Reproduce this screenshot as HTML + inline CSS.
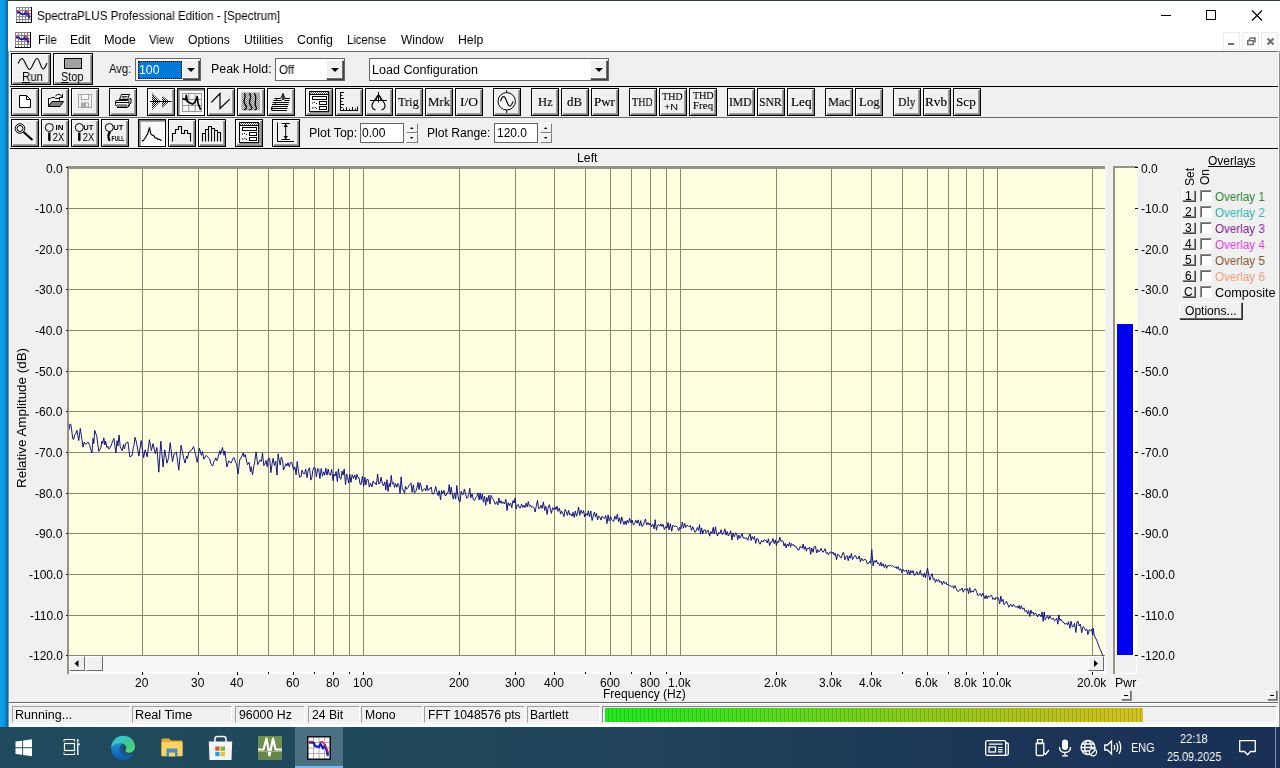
<!DOCTYPE html><html><head><meta charset="utf-8"><title>SpectraPLUS Professional Edition - [Spectrum]</title><style>
*{box-sizing:border-box;margin:0;padding:0}
html,body{width:1280px;height:768px;overflow:hidden;background:#f0f0f0;font-family:"Liberation Sans",sans-serif;font-size:12px;color:#000}
.a{position:absolute}
.t{position:absolute;white-space:nowrap;line-height:1;will-change:transform}
.ic{position:absolute;left:-1px;top:-1px}
#desk{left:0;top:0;width:10px;height:728px;background:linear-gradient(90deg,#0ea2ec 0,#0a98e2 4px,#0c84c8 6px,#14629c 7.5px,#1c5686 8px,#6f9cc0 8px,#6f9cc0 9px,#fff 9px)}
#title{left:8px;top:0;width:1272px;height:31px;background:#fff;border-top:1px solid #2b3a42}
#menu{left:8px;top:31px;width:1272px;height:20px;background:#fff}
.tb{left:9px;width:1270px;background:#f0f0f0;border-top:1px solid #6a6a6a}
.btn{will-change:transform;position:absolute;width:28px;height:28px;background:#f0f0f0;border:1px solid #000;box-shadow:inset 1px 1px 0 #fff,inset -1px -1px 0 #808080,inset -2px -2px 0 #a0a0a0;}
.btn.dn{box-shadow:inset 1px 1px 0 #808080,inset 2px 2px 0 #a8a8a8,inset -1px -1px 0 #fff;background:#f8f8f8}
.combo{position:absolute;background:#fff;border:1px solid #666}
.cbtn{position:absolute;width:17px;height:19px;background:#f0f0f0;border:1px solid;border-color:#fff #707070 #707070 #fff;box-shadow:1px 1px 0 #404040}
.cbtn:after{content:"";position:absolute;left:4px;top:7px;border:4px solid transparent;border-top:4px solid #000;border-bottom:0}
.spin{position:absolute;width:12px;height:10px;background:#f2f2f2;border:1px solid;border-color:#fff #7c7c7c #7c7c7c #fff}
.gl{position:absolute;background:#87876c}
.sp{position:absolute;height:17px;top:706px;border:1px solid;border-color:#a0a0a0 #fff #fff #a0a0a0}
#task{left:0;top:727px;width:1280px;height:41px;background:linear-gradient(90deg,#204a5d 0%,#21485b 35%,#20435a 50%,#1e3c58 62%,#1c3657 75%,#1a3056 100%)}
.ob{position:absolute;width:13px;height:11px;left:1182px;border:1px solid;border-color:#fff #8a8a8a #8a8a8a #fff;box-shadow:1px 1px 0 #484848;background:#f0f0f0}
.ck{position:absolute;width:12px;height:12px;left:1200px;background:#fff;border:1px solid;border-color:#8c8c8c #fafafa #fafafa #8c8c8c;box-shadow:inset 1px 1px 0 #686868}
.sm{position:absolute;width:10px;height:10px;background:#f0f0f0;border:1px solid;border-color:#fff #707070 #707070 #fff;box-shadow:1px 1px 0 #909090}
.sm:after{content:"";position:absolute;left:2px;top:4px;width:4px;height:1px;background:#000}
.mdi{position:absolute;top:32px;width:17px;height:18px;border:1px solid #ececec;background:#fdfdfd}
</style></head><body>
<svg width="0" height="0" style="position:absolute"><defs>
<pattern id="dth" width="2" height="2" patternUnits="userSpaceOnUse"><rect width="2" height="2" fill="#e8e8e8"/><rect width="1" height="1" fill="#000"/><rect x="1" y="1" width="1" height="1" fill="#000"/></pattern>
<pattern id="dtg" width="2" height="2" patternUnits="userSpaceOnUse"><rect width="2" height="2" fill="#d0d0d0"/><rect width="1" height="1" fill="#8c8c8c"/><rect x="1" y="1" width="1" height="1" fill="#8c8c8c"/></pattern>
<pattern id="dtp" width="2" height="2" patternUnits="userSpaceOnUse"><rect width="2" height="2" fill="#fff"/><rect width="1" height="1" fill="#555"/><rect x="1" y="1" width="1" height="1" fill="#555"/></pattern>
</defs></svg>
<div class="a" id="desk"></div>
<div class="a" id="title"></div>
<div class="a" style="left:16px;top:7px;width:16px;height:16px"><!--app--><svg style="position:absolute;left:0;top:0" width="16" height="16" viewBox="0 0 16 16"><rect width="16" height="16" fill="#fff"/><path d="M0.50 0V15.0M0 0.50H15.0" stroke="#8a8a8a" stroke-width="1.00"/><path d="M3.50 0V15.0M0 3.50H15.0" stroke="#8a8a8a" stroke-width="1.00"/><path d="M6.50 0V15.0M0 6.50H15.0" stroke="#8a8a8a" stroke-width="1.00"/><path d="M9.50 0V15.0M0 9.50H15.0" stroke="#8a8a8a" stroke-width="1.00"/><path d="M12.50 0V15.0M0 12.50H15.0" stroke="#8a8a8a" stroke-width="1.00"/><path d="M15.5 0V15.5H0" fill="none" stroke="#000" stroke-width="1.00"/><path d="M1.0 5.0L4.0 5.5L5.0 7.0L8.0 7.5L9.5 5.5L11.0 8.0L12.5 6.5L13.5 11.5" fill="none" stroke="#1414b8" stroke-width="1.60"/><path d="M0.5 4.0L3.0 4.5M8.5 5.0L10.5 4.0L12.0 5.5L14.0 9.5" fill="none" stroke="#d01840" stroke-width="1.20"/></svg></div>
<div class="t" style="left:37.18px;top:10.20px;font-size:12px;transform:scaleX(0.969);transform-origin:0 0;">SpectraPLUS Professional Edition - [Spectrum]</div>
<svg class="a" style="left:1140px;top:1px" width="140" height="30"><path d="M21 14.500H31" stroke="#000"/><rect x="66.500" y="9.500" width="9" height="9" fill="none" stroke="#000"/><path d="M112 9.500L122 19.500M122 9.500L112 19.500" stroke="#000" stroke-width="1.100"/></svg>
<div class="a" id="menu"></div>
<div class="a" style="left:15px;top:32px;width:16px;height:16px"><svg style="position:absolute;left:0;top:0" width="16" height="16" viewBox="0 0 16 16"><rect width="16" height="16" fill="#fff"/><path d="M0.50 0V15.0M0 0.50H15.0" stroke="#8a8a8a" stroke-width="1.00"/><path d="M3.50 0V15.0M0 3.50H15.0" stroke="#8a8a8a" stroke-width="1.00"/><path d="M6.50 0V15.0M0 6.50H15.0" stroke="#8a8a8a" stroke-width="1.00"/><path d="M9.50 0V15.0M0 9.50H15.0" stroke="#8a8a8a" stroke-width="1.00"/><path d="M12.50 0V15.0M0 12.50H15.0" stroke="#8a8a8a" stroke-width="1.00"/><path d="M15.5 0V15.5H0" fill="none" stroke="#000" stroke-width="1.00"/><path d="M1.0 5.0L4.0 5.5L5.0 7.0L8.0 7.5L9.5 5.5L11.0 8.0L12.5 6.5L13.5 11.5" fill="none" stroke="#1414b8" stroke-width="1.60"/><path d="M0.5 4.0L3.0 4.5M8.5 5.0L10.5 4.0L12.0 5.5L14.0 9.5" fill="none" stroke="#d01840" stroke-width="1.20"/></svg></div>
<div class="t" style="left:37.57px;top:34.40px;font-size:12px;transform:scaleX(0.968);transform-origin:0 0;">File</div>
<div class="t" style="left:69.66px;top:34.40px;font-size:12px;transform:scaleX(0.981);transform-origin:0 0;">Edit</div>
<div class="t" style="left:103.73px;top:34.40px;font-size:12px;transform:scaleX(1.059);transform-origin:0 0;">Mode</div>
<div class="t" style="left:149.40px;top:34.40px;font-size:12px;transform:scaleX(0.946);transform-origin:0 0;">View</div>
<div class="t" style="left:188.25px;top:34.40px;font-size:12px;transform:scaleX(1.013);transform-origin:0 0;">Options</div>
<div class="t" style="left:243.99px;top:34.40px;font-size:12px;transform:scaleX(1.017);transform-origin:0 0;">Utilities</div>
<div class="t" style="left:297.28px;top:34.40px;font-size:12px;transform:scaleX(1.034);transform-origin:0 0;">Config</div>
<div class="t" style="left:347.10px;top:34.40px;font-size:12px;transform:scaleX(0.942);transform-origin:0 0;">License</div>
<div class="t" style="left:400.90px;top:34.40px;font-size:12px;">Window</div>
<div class="t" style="left:457.77px;top:34.40px;font-size:12px;transform:scaleX(1.023);transform-origin:0 0;">Help</div>
<div class="mdi" style="left:1223px"></div>
<div class="mdi" style="left:1242px"></div>
<div class="mdi" style="left:1261px"></div>
<svg class="a" style="left:1223px;top:32px" width="56" height="18"><rect x="5" y="11" width="6" height="2" fill="#6e6e6e"/><path d="M26.500 6H32V10.500M26.500 6.500V8" fill="none" stroke="#6e6e6e" stroke-width="1.600"/><rect x="24.700" y="8.700" width="5.600" height="3.800" fill="none" stroke="#6e6e6e" stroke-width="1.400"/><path d="M44.500 6.500L50.500 12.500M50.500 6.500L44.500 12.500" stroke="#6e6e6e" stroke-width="2"/></svg>
<div class="a tb" style="top:51px;height:36px"></div>
<div class="a tb" style="top:86px;height:31px;border-top-color:#000"></div>
<div class="a tb" style="top:117px;height:32px;border-bottom:1px solid #000"></div>
<div class="a" style="left:9px;top:51px;width:1px;height:677px;background:#fff"></div>
<div class="a" style="left:1278px;top:51px;width:1px;height:676px;background:#fafafa"></div>
<div class="a" style="left:1279px;top:51px;width:1px;height:676px;background:#8c8c8c"></div>
<div class="btn" style="left:11px;top:53px;width:40px;height:32px"></div>
<svg class="a" style="left:11px;top:53px" width="40" height="32"><path d="M7 10.500C8.500 8 9.500 5.500 11 5.500C13.500 5.500 16 16.500 18.500 16.500C21 16.500 23.500 5.500 26 5.500C28.500 5.500 30 16 32 16C33.500 16 35 12.500 36 10" fill="none" stroke="#000" stroke-width="1.100"/></svg>
<div class="t" style="left:21.68px;top:71.20px;font-size:12px;transform:scaleX(0.954);transform-origin:0 0;"><u>R</u>un</div>
<div class="btn" style="left:53px;top:53px;width:40px;height:32px"></div>
<div class="a" style="left:64px;top:58px;width:18px;height:11px;background:#a0a0a0;border:1px solid #000"></div>
<div class="t" style="left:61.01px;top:71.20px;font-size:12px;transform:scaleX(0.909);transform-origin:0 0;"><u>S</u>top</div>
<div class="t" style="left:109.20px;top:62.80px;font-size:12px;transform:scaleX(0.932);transform-origin:0 0;">Avg:</div>
<div class="combo" style="left:135px;top:58px;width:66px;height:23px"><div class="a" style="left:2px;top:2px;width:44px;height:18px;background:#0078d7;outline:1px dotted #000;outline-offset:-1px"></div><div class="cbtn" style="left:46px;top:1px"></div></div>
<div class="t" style="left:139.38px;top:63.50px;font-size:12px;transform:scaleX(1.024);transform-origin:0 0;color:#fff;">100</div>
<div class="t" style="left:210.51px;top:62.80px;font-size:12px;transform:scaleX(1.032);transform-origin:0 0;">Peak Hold:</div>
<div class="combo" style="left:275px;top:58px;width:70px;height:23px"><div class="cbtn" style="left:50px;top:1px"></div></div>
<div class="t" style="left:278.88px;top:63.50px;font-size:12px;transform:scaleX(0.954);transform-origin:0 0;">Off</div>
<div class="combo" style="left:369px;top:58px;width:240px;height:23px"><div class="cbtn" style="left:220px;top:1px"></div></div>
<div class="t" style="left:372.20px;top:63.50px;font-size:12px;transform:scaleX(1.046);transform-origin:0 0;">Load Configuration</div>
<div class="btn" style="left:11px;top:88px"><svg class="ic" width="28" height="28" viewBox="0 0 28 28" ><path d="M8.5 7.5H15.5L19.5 11.5V19.5H8.5Z" fill="#fff" stroke="#000"/><path d="M15.5 7.5V11.5H19.5" fill="none" stroke="#000" stroke-width="1"/></svg></div>
<div class="btn" style="left:41px;top:88px"><svg class="ic" width="28" height="28" viewBox="0 0 28 28" ><path d="M7.5 18.5V10.5H9.5L10.5 9.5H13.5L14.5 10.5H18.5V12.5" fill="none" stroke="#000" stroke-width="1"/><path d="M7.5 18.5L11 13.5H22.5L19 18.5Z" fill="#808080" stroke="#000"/><path d="M14.5 8Q17.5 4.5 21 8.5" fill="none" stroke="#000" stroke-width="1"/><path d="M21.5 6V9.5H18" fill="none" stroke="#000" stroke-width="1"/></svg></div>
<div class="btn" style="left:71px;top:88px"><svg class="ic" width="28" height="28" viewBox="0 0 28 28" ><rect x="7.5" y="6.5" width="13" height="13" fill="#f0f0f0" stroke="#a8a8a8"/><rect x="10.5" y="6.5" width="7" height="5" fill="#fafafa" stroke="#a8a8a8"/><rect x="10" y="14.5" width="8" height="5" fill="#a8a8a8"/><rect x="15" y="15.5" width="2" height="3" fill="#f4f4f4"/></svg></div>
<div class="btn" style="left:109px;top:88px"><svg class="ic" width="28" height="28" viewBox="0 0 28 28" ><path d="M10.5 11.5L12.5 6.5H20.5L18.5 11.5Z" fill="#fff" stroke="#000"/><path d="M13 8.5H18.5M12.5 10H17.5" stroke="#000" stroke-width=".8"/><path d="M8 12.5 Q6.5 12.5 6.5 14V16.5Q6.5 18 8 18H18.5Q20 18 20 16.500V14Q20 12.500 18.500 12.500Z" fill="#fff" stroke="#000"/><path d="M10 11.5H19.500L22 10.500V15L20 17" fill="none" stroke="#000" stroke-width="1"/><path d="M7 14.500H19.500" stroke="#000"/><path d="M8 16.500H18" stroke="#909090"/><path d="M8 19.500H18.500L21 17" fill="none" stroke="#000" stroke-width="1"/></svg></div>
<div class="btn" style="left:147px;top:88px"><svg class="ic" width="28" height="28" viewBox="0 0 28 28" ><path d="M5 5L13.500 13.500L5 22Z" fill="url(#dth)"/><path d="M15 7.500L22 13.500L15 20Z" fill="url(#dth)"/><path d="M3 13.500H24.500" stroke="#000"/></svg></div>
<div class="btn dn" style="left:177px;top:88px"><svg class="ic" width="28" height="28" viewBox="0 0 28 28" ><rect x="5.500" y="5.500" width="19" height="18" fill="#f6f6f6" stroke="#989898"/><path d="M11.800 5.500V23.500M18.200 5.500V23.500M5.500 11.500H24.500M5.500 17.500H24.500" stroke="#989898"/><path d="M5.500 10.500L8.600 11.800L9.300 7.400L10.300 13.600L13 14.900L15.500 16.100L18 14.200L20.200 8.600L21.100 15.500L23.600 21.700" fill="none" stroke="#000" stroke-width="1.700" stroke-linejoin="round"/></svg></div>
<div class="btn" style="left:207px;top:88px"><svg class="ic" width="28" height="28" viewBox="0 0 28 28" ><path d="M4.300 14.300L13 5.500V20.500L22.800 11.100" fill="none" stroke="#000" stroke-width="1.200"/></svg></div>
<div class="btn" style="left:237px;top:88px"><svg class="ic" width="28" height="28" viewBox="0 0 28 28" ><rect x="4.500" y="4.500" width="18.500" height="18" fill="url(#dtg)"/><path d="M7.500 5Q9 8 7.500 11T8.500 17T7 22M12.500 5Q14.500 9 13 12T14 18T12 22M17.500 5Q19.500 9 18.500 13T19 19T17.500 22" fill="none" stroke="#000" stroke-width="1.200"/></svg></div>
<div class="btn" style="left:267px;top:88px"><svg class="ic" width="28" height="28" viewBox="0 0 28 28" ><path d="M7.500 10.500H13.500L15 8L16 5.500L17 8L17.500 10.500H23M6.300 12.500H14.500L16 10.500L17.500 12.500H22.500M5.500 14.500H22M5 16.500H21.500M4.800 18.500H21M4.500 20.500H20.500M5 22.500H20" fill="none" stroke="#000"/><path d="M15 10.500L16 6L17 10.500Z" fill="#000"/><rect x="4" y="19" width="1.500" height="3.500" fill="#000"/><path d="M10 10.500L8.500 12.500M9 14.500L7.500 16.500" stroke="#000"/></svg></div>
<div class="btn" style="left:305px;top:88px"><svg class="ic" width="28" height="28" viewBox="0 0 28 28" ><rect x="4.500" y="3.500" width="19" height="20" fill="#fafafa" stroke="#000"/><rect x="5" y="4" width="18" height="2.500" fill="url(#dtp)"/><path d="M4.500 6.500H23.500" stroke="#000"/><rect x="7.500" y="8.500" width="14" height="3" fill="#fff" stroke="#000"/><rect x="14.500" y="13.500" width="7" height="3" fill="#fff" stroke="#000"/><rect x="14.500" y="18.500" width="7" height="3" fill="#fff" stroke="#000"/><path d="M7 15H8M9 14.500H10M11 15.500H12M7 20H8.500M9.500 19.500H10.500M11 20.500H12" stroke="#000"/><path d="M24.300 4V24.300H5" fill="none" stroke="#555" stroke-width=".8"/></svg></div>
<div class="btn" style="left:335px;top:88px"><svg class="ic" width="28" height="28" viewBox="0 0 28 28" ><path d="M5.500 4V22.500H23" fill="none" stroke="#000"/><path d="M5.500 4.500H9M5.500 7.500H7.500M5.500 10.500H9M5.500 13.500H7.500M5.500 16.500H9M5.500 19.500H7.500M8.500 22V20.500M11.500 22V19M14.500 22V20.500M17.500 22V19M20.500 22V20.500M22.500 22V18.500" stroke="#000"/></svg></div>
<div class="btn" style="left:365px;top:88px"><svg class="ic" width="28" height="28" viewBox="0 0 28 28" ><path d="M13.500 4V14.500M5 12.500H22" stroke="#000"/><path d="M13 7L7.800 15Q5.800 18.500 8.500 21L10.500 22M14 7L19.200 15Q21.200 18.500 18.500 21L16.500 22" fill="none" stroke="#000" stroke-width="1.100"/><path d="M12.500 8L11 12.500M14.500 8L16 12.500" stroke="#000"/></svg></div>
<div class="btn" style="left:395px;top:88px"></div>
<div class="btn" style="left:425px;top:88px"></div>
<div class="btn" style="left:455px;top:88px"></div>
<div class="btn" style="left:493px;top:88px"><svg class="ic" width="28" height="28" viewBox="0 0 28 28" ><circle cx="13.700" cy="13.300" r="8.700" fill="#f8f8f8" stroke="#000"/><path d="M13.700 2V4.600M13.700 22V25" stroke="#000"/><path d="M7.500 13.300Q10.500 4 13.700 13.300T20 13.300" fill="none" stroke="#000" stroke-width="1.100"/></svg></div>
<div class="btn" style="left:531px;top:88px"></div>
<div class="btn" style="left:561px;top:88px"></div>
<div class="btn" style="left:591px;top:88px"></div>
<div class="btn" style="left:629px;top:88px"></div>
<div class="btn" style="left:659px;top:88px"></div>
<div class="btn" style="left:689px;top:88px"></div>
<div class="btn" style="left:727px;top:88px"></div>
<div class="btn" style="left:757px;top:88px"></div>
<div class="btn" style="left:787px;top:88px"></div>
<div class="btn" style="left:825px;top:88px"></div>
<div class="btn" style="left:855px;top:88px"></div>
<div class="btn" style="left:893px;top:88px"></div>
<div class="btn" style="left:923px;top:88px"></div>
<div class="btn" style="left:953px;top:88px"></div>
<div class="t" style="left:398.42px;top:94.80px;font-size:13px;font-family:'Liberation Serif',serif;text-shadow:0 0 .35px rgba(0,0,0,.4);transform:scaleX(0.944);transform-origin:0 0;">Trig</div>
<div class="t" style="left:427.58px;top:94.80px;font-size:13px;font-family:'Liberation Serif',serif;text-shadow:0 0 .35px rgba(0,0,0,.4);transform:scaleX(0.980);transform-origin:0 0;">Mrk</div>
<div class="t" style="left:460.23px;top:94.80px;font-size:13px;font-family:'Liberation Serif',serif;text-shadow:0 0 .35px rgba(0,0,0,.4);transform:scaleX(1.041);transform-origin:0 0;">I/O</div>
<div class="t" style="left:537.79px;top:94.80px;font-size:13px;font-family:'Liberation Serif',serif;text-shadow:0 0 .35px rgba(0,0,0,.4);transform:scaleX(0.959);transform-origin:0 0;">Hz</div>
<div class="t" style="left:567.25px;top:94.80px;font-size:13px;font-family:'Liberation Serif',serif;text-shadow:0 0 .35px rgba(0,0,0,.4);transform:scaleX(0.985);transform-origin:0 0;">dB</div>
<div class="t" style="left:593.58px;top:94.80px;font-size:13px;font-family:'Liberation Serif',serif;text-shadow:0 0 .35px rgba(0,0,0,.4);">Pwr</div>
<div class="t" style="left:631.65px;top:94.80px;font-size:13px;font-family:'Liberation Serif',serif;text-shadow:0 0 .35px rgba(0,0,0,.4);transform:scaleX(0.775);transform-origin:0 0;">THD</div>
<div class="t" style="left:729.19px;top:94.80px;font-size:13px;font-family:'Liberation Serif',serif;text-shadow:0 0 .35px rgba(0,0,0,.4);transform:scaleX(0.891);transform-origin:0 0;">IMD</div>
<div class="t" style="left:758.74px;top:94.80px;font-size:13px;font-family:'Liberation Serif',serif;text-shadow:0 0 .35px rgba(0,0,0,.4);transform:scaleX(0.902);transform-origin:0 0;">SNR</div>
<div class="t" style="left:790.67px;top:94.80px;font-size:13px;font-family:'Liberation Serif',serif;text-shadow:0 0 .35px rgba(0,0,0,.4);transform:scaleX(1.015);transform-origin:0 0;">Leq</div>
<div class="t" style="left:827.69px;top:94.80px;font-size:13px;font-family:'Liberation Serif',serif;text-shadow:0 0 .35px rgba(0,0,0,.4);transform:scaleX(0.954);transform-origin:0 0;">Mac</div>
<div class="t" style="left:858.58px;top:94.80px;font-size:13px;font-family:'Liberation Serif',serif;text-shadow:0 0 .35px rgba(0,0,0,.4);transform:scaleX(0.980);transform-origin:0 0;">Log</div>
<div class="t" style="left:897.51px;top:94.80px;font-size:13px;font-family:'Liberation Serif',serif;text-shadow:0 0 .35px rgba(0,0,0,.4);transform:scaleX(0.897);transform-origin:0 0;">Dly</div>
<div class="t" style="left:925.37px;top:94.80px;font-size:13px;font-family:'Liberation Serif',serif;text-shadow:0 0 .35px rgba(0,0,0,.4);transform:scaleX(1.021);transform-origin:0 0;">Rvb</div>
<div class="t" style="left:955.65px;top:94.80px;font-size:13px;font-family:'Liberation Serif',serif;text-shadow:0 0 .35px rgba(0,0,0,.4);transform:scaleX(1.011);transform-origin:0 0;">Scp</div>
<div class="t" style="left:662.15px;top:90.70px;font-size:11px;font-family:'Liberation Serif',serif;text-shadow:0 0 .35px rgba(0,0,0,.4);transform:scaleX(0.907);transform-origin:0 0;">THD</div>
<div class="t" style="left:664.01px;top:102.70px;font-size:9px;transform:scaleX(1.210);transform-origin:0 0;">+N</div>
<div class="t" style="left:693.15px;top:89.90px;font-size:11px;font-family:'Liberation Serif',serif;text-shadow:0 0 .35px rgba(0,0,0,.4);transform:scaleX(0.902);transform-origin:0 0;">THD</div>
<div class="t" style="left:693.23px;top:99.70px;font-size:11px;font-family:'Liberation Serif',serif;text-shadow:0 0 .35px rgba(0,0,0,.4);transform:scaleX(0.988);transform-origin:0 0;">Freq</div>
<div class="btn" style="left:11px;top:119px"><svg class="ic" width="28" height="28" viewBox="0 0 28 28" ><circle cx="9" cy="9.500" r="4.800" fill="none" stroke="#000"/><circle cx="9" cy="9.500" r="3" fill="none" stroke="#000"/><path d="M12.500 13L21.500 21" stroke="#000" stroke-width="2"/></svg></div>
<div class="btn" style="left:41px;top:119px"><svg class="ic" width="28" height="28" viewBox="0 0 28 28" ><circle cx="8.300" cy="8.500" r="4" fill="none" stroke="#000"/><path d="M8.300 13.500V21.500" stroke="#000" stroke-width="2.400"/><path d="M7.200 21L8.300 22.500L9.400 21Z" fill="#000"/><text x="14.6" y="11" font-family="Liberation Sans,sans-serif" font-weight="bold" font-size="7" textLength="7.9" lengthAdjust="spacingAndGlyphs">IN</text><text x="11.8" y="22.300" font-family="Liberation Sans,sans-serif" font-size="11"  textLength="11.5" lengthAdjust="spacingAndGlyphs">2X</text></svg></div>
<div class="btn" style="left:71px;top:119px"><svg class="ic" width="28" height="28" viewBox="0 0 28 28" ><circle cx="8.300" cy="8.500" r="4" fill="none" stroke="#000"/><path d="M8.300 13.500V21.500" stroke="#000" stroke-width="2.400"/><path d="M7.200 21L8.300 22.500L9.400 21Z" fill="#000"/><text x="12.3" y="11" font-family="Liberation Sans,sans-serif" font-weight="bold" font-size="7" textLength="10.2" lengthAdjust="spacingAndGlyphs">UT</text><text x="11.8" y="22.300" font-family="Liberation Sans,sans-serif" font-size="11"  textLength="11.5" lengthAdjust="spacingAndGlyphs">2X</text></svg></div>
<div class="btn" style="left:101px;top:119px"><svg class="ic" width="28" height="28" viewBox="0 0 28 28" ><circle cx="8.300" cy="8.500" r="4" fill="none" stroke="#000"/><path d="M9.500 13Q7 14.500 7.500 18L8.500 22" fill="none" stroke="#000" stroke-width="2.200"/><text x="12.3" y="11" font-family="Liberation Sans,sans-serif" font-weight="bold" font-size="7" textLength="10.2" lengthAdjust="spacingAndGlyphs">UT</text><text x="10.6" y="22.300" font-family="Liberation Sans,sans-serif" font-size="7" font-weight='bold' textLength="12.700000000000001" lengthAdjust="spacingAndGlyphs">FULL</text></svg></div>
<div class="btn dn" style="left:138px;top:119px"><svg class="ic" width="28" height="28" viewBox="0 0 28 28" ><path d="M4.500 22.500V21.500L5.500 21.500L7.600 18.300L9.500 15.100L10.500 12L11.400 8.500L12.200 12L12.800 14.800L14.500 16.400L15.500 16.400L17 18.900L18.500 19L20.100 20.300L21.500 20.300L23.500 21.800" fill="none" stroke="#000" stroke-width="1.150"/></svg></div>
<div class="btn" style="left:168px;top:119px"><svg class="ic" width="28" height="28" viewBox="0 0 28 28" ><path d="M4.500 22.500V14.500H7.500V10.500H10.500V7.500H13.500V14.500H16.500V11.500H19.500V14.500H22.500V22.500" fill="none" stroke="#000" stroke-width="1.100"/></svg></div>
<div class="btn" style="left:198px;top:119px"><svg class="ic" width="28" height="28" viewBox="0 0 28 28" ><path d="M4.500 22.500V14.500H7.500V22.500M7.500 14.500V10.500H10.500V22.500M10.500 10.500V7.500H13.500V22.500M13.500 9.500H16.500V22.500M16.500 11.500H19.500V22.500M19.500 13.500H22.500V22.500" fill="none" stroke="#000" stroke-width="1.100"/></svg></div>
<div class="btn" style="left:235px;top:119px"><svg class="ic" width="28" height="28" viewBox="0 0 28 28" ><rect x="4.500" y="3.500" width="19" height="20" fill="#fafafa" stroke="#000"/><rect x="5" y="4" width="18" height="2.500" fill="url(#dtp)"/><path d="M4.500 6.500H23.500" stroke="#000"/><rect x="7.500" y="8.500" width="14" height="3" fill="#fff" stroke="#000"/><rect x="14.500" y="13.500" width="7" height="3" fill="#fff" stroke="#000"/><rect x="14.500" y="18.500" width="7" height="3" fill="#fff" stroke="#000"/><path d="M7 15H8M9 14.500H10M11 15.500H12M7 20H8.500M9.500 19.500H10.500M11 20.500H12" stroke="#000"/><path d="M24.300 4V24.300H5" fill="none" stroke="#555" stroke-width=".8"/></svg></div>
<div class="btn" style="left:272px;top:119px"><svg class="ic" width="28" height="28" viewBox="0 0 28 28" ><path d="M5.500 3.500V22.500H22" fill="none" stroke="#000"/><path d="M9.500 4.500H18M9.500 20.500H18M13.700 5V20" stroke="#000"/><path d="M11.500 8L13.700 5L16 8ZM11.500 17L13.700 20L16 17Z" fill="#000"/></svg></div>
<div class="t" style="left:308.75px;top:127.20px;font-size:12px;transform:scaleX(1.038);transform-origin:0 0;">Plot Top:</div>
<div class="combo" style="left:360px;top:123px;width:44px;height:20px"></div>
<div class="t" style="left:362.18px;top:127.00px;font-size:12px;transform:scaleX(1.009);transform-origin:0 0;">0.00</div>
<div class="spin" style="left:406px;top:123px"></div><div class="spin" style="left:406px;top:133px"></div>
<div class="t" style="left:426.63px;top:127.20px;font-size:12px;transform:scaleX(1.011);transform-origin:0 0;">Plot Range:</div>
<div class="combo" style="left:494px;top:123px;width:44px;height:20px"></div>
<div class="t" style="left:496.51px;top:127.00px;font-size:12px;transform:scaleX(0.994);transform-origin:0 0;">120.0</div>
<div class="spin" style="left:540px;top:123px"></div><div class="spin" style="left:540px;top:133px"></div>
<svg class="a" style="left:407px;top:123px" width="150" height="22"><path d="M3 6L4.700 4L6.400 6ZM3 14L4.700 16L6.400 14ZM137 6L138.700 4L140.400 6ZM137 14L138.700 16L140.400 14Z" fill="#000"/></svg>
<div class="a" style="left:67px;top:166px;width:1038px;height:508px;background:#949486"></div>
<div class="a" style="left:69px;top:169px;width:1036px;height:487px;background:#ffffe1"></div>
<div class="gl" style="left:142px;top:169px;width:1px;height:487px"></div>
<div class="gl" style="left:198px;top:169px;width:1px;height:487px"></div>
<div class="gl" style="left:237px;top:169px;width:1px;height:487px"></div>
<div class="gl" style="left:268px;top:169px;width:1px;height:487px"></div>
<div class="gl" style="left:293px;top:169px;width:1px;height:487px"></div>
<div class="gl" style="left:314px;top:169px;width:1px;height:487px"></div>
<div class="gl" style="left:333px;top:169px;width:1px;height:487px"></div>
<div class="gl" style="left:349px;top:169px;width:1px;height:487px"></div>
<div class="gl" style="left:363px;top:169px;width:1px;height:487px"></div>
<div class="gl" style="left:459px;top:169px;width:1px;height:487px"></div>
<div class="gl" style="left:515px;top:169px;width:1px;height:487px"></div>
<div class="gl" style="left:554px;top:169px;width:1px;height:487px"></div>
<div class="gl" style="left:585px;top:169px;width:1px;height:487px"></div>
<div class="gl" style="left:610px;top:169px;width:1px;height:487px"></div>
<div class="gl" style="left:631px;top:169px;width:1px;height:487px"></div>
<div class="gl" style="left:650px;top:169px;width:1px;height:487px"></div>
<div class="gl" style="left:666px;top:169px;width:1px;height:487px"></div>
<div class="gl" style="left:680px;top:169px;width:1px;height:487px"></div>
<div class="gl" style="left:776px;top:169px;width:1px;height:487px"></div>
<div class="gl" style="left:831px;top:169px;width:1px;height:487px"></div>
<div class="gl" style="left:871px;top:169px;width:1px;height:487px"></div>
<div class="gl" style="left:902px;top:169px;width:1px;height:487px"></div>
<div class="gl" style="left:927px;top:169px;width:1px;height:487px"></div>
<div class="gl" style="left:948px;top:169px;width:1px;height:487px"></div>
<div class="gl" style="left:966px;top:169px;width:1px;height:487px"></div>
<div class="gl" style="left:983px;top:169px;width:1px;height:487px"></div>
<div class="gl" style="left:997px;top:169px;width:1px;height:487px"></div>
<div class="gl" style="left:1092px;top:169px;width:1px;height:487px"></div>
<div class="gl" style="left:69px;top:208px;width:1036px;height:1px"></div>
<div class="gl" style="left:69px;top:249px;width:1036px;height:1px"></div>
<div class="gl" style="left:69px;top:289px;width:1036px;height:1px"></div>
<div class="gl" style="left:69px;top:330px;width:1036px;height:1px"></div>
<div class="gl" style="left:69px;top:371px;width:1036px;height:1px"></div>
<div class="gl" style="left:69px;top:411px;width:1036px;height:1px"></div>
<div class="gl" style="left:69px;top:452px;width:1036px;height:1px"></div>
<div class="gl" style="left:69px;top:493px;width:1036px;height:1px"></div>
<div class="gl" style="left:69px;top:533px;width:1036px;height:1px"></div>
<div class="gl" style="left:69px;top:574px;width:1036px;height:1px"></div>
<div class="gl" style="left:69px;top:615px;width:1036px;height:1px"></div>
<div class="gl" style="left:69px;top:655px;width:1036px;height:1px"></div>
<div class="t" style="left:45.94px;top:162.80px;font-size:12px;">0.0</div>
<div class="t" style="left:1140.98px;top:162.80px;font-size:12px;">0.0</div>
<div class="a" style="left:66px;top:167px;width:2px;height:1px;background:#222"></div>
<div class="t" style="left:35.26px;top:203.05px;font-size:12px;">-10.0</div>
<div class="t" style="left:1140.92px;top:203.05px;font-size:12px;">-10.0</div>
<div class="a" style="left:66px;top:208px;width:2px;height:1px;background:#222"></div>
<div class="t" style="left:35.26px;top:243.70px;font-size:12px;">-20.0</div>
<div class="t" style="left:1140.92px;top:243.70px;font-size:12px;">-20.0</div>
<div class="a" style="left:66px;top:249px;width:2px;height:1px;background:#222"></div>
<div class="t" style="left:35.26px;top:284.35px;font-size:12px;">-30.0</div>
<div class="t" style="left:1140.92px;top:284.35px;font-size:12px;">-30.0</div>
<div class="a" style="left:66px;top:289px;width:2px;height:1px;background:#222"></div>
<div class="t" style="left:35.26px;top:325.00px;font-size:12px;">-40.0</div>
<div class="t" style="left:1140.92px;top:325.00px;font-size:12px;">-40.0</div>
<div class="a" style="left:66px;top:330px;width:2px;height:1px;background:#222"></div>
<div class="t" style="left:35.26px;top:365.65px;font-size:12px;">-50.0</div>
<div class="t" style="left:1140.92px;top:365.65px;font-size:12px;">-50.0</div>
<div class="a" style="left:66px;top:371px;width:2px;height:1px;background:#222"></div>
<div class="t" style="left:35.26px;top:406.30px;font-size:12px;">-60.0</div>
<div class="t" style="left:1140.92px;top:406.30px;font-size:12px;">-60.0</div>
<div class="a" style="left:66px;top:411px;width:2px;height:1px;background:#222"></div>
<div class="t" style="left:35.26px;top:446.95px;font-size:12px;">-70.0</div>
<div class="t" style="left:1140.92px;top:446.95px;font-size:12px;">-70.0</div>
<div class="a" style="left:66px;top:452px;width:2px;height:1px;background:#222"></div>
<div class="t" style="left:35.26px;top:487.60px;font-size:12px;">-80.0</div>
<div class="t" style="left:1140.92px;top:487.60px;font-size:12px;">-80.0</div>
<div class="a" style="left:66px;top:493px;width:2px;height:1px;background:#222"></div>
<div class="t" style="left:35.26px;top:528.25px;font-size:12px;">-90.0</div>
<div class="t" style="left:1140.92px;top:528.25px;font-size:12px;">-90.0</div>
<div class="a" style="left:66px;top:533px;width:2px;height:1px;background:#222"></div>
<div class="t" style="left:28.60px;top:568.90px;font-size:12px;">-100.0</div>
<div class="t" style="left:1140.92px;top:568.90px;font-size:12px;">-100.0</div>
<div class="a" style="left:66px;top:574px;width:2px;height:1px;background:#222"></div>
<div class="t" style="left:29.50px;top:609.55px;font-size:12px;">-110.0</div>
<div class="t" style="left:1140.92px;top:609.55px;font-size:12px;">-110.0</div>
<div class="a" style="left:66px;top:615px;width:2px;height:1px;background:#222"></div>
<div class="t" style="left:28.60px;top:650.20px;font-size:12px;">-120.0</div>
<div class="t" style="left:1140.92px;top:650.20px;font-size:12px;">-120.0</div>
<div class="a" style="left:66px;top:655px;width:2px;height:1px;background:#222"></div>
<svg class="a" style="left:69px;top:169px" width="1036" height="487" viewBox="0 0 1036 487"><path d="M-0.9 259.0L0.1 260.6L0.9 255.1L1.9 255.4L3.8 269.9L4.8 270.4L5.6 265.9L6.6 265.2L7.9 261.3L9.8 271.5L11.3 259.4L12.2 265.7L13.0 270.7L14.0 278.2L15.2 273.0L16.8 275.4L19.1 273.0L20.7 276.3L21.5 279.8L23.0 284.0L24.0 269.3L24.8 274.6L25.7 261.3L27.7 266.8L29.8 282.4L31.9 278.5L32.9 272.1L33.7 274.6L34.8 268.8L35.9 276.0L36.7 272.3L37.9 278.5L38.9 277.2L39.7 279.9L40.7 279.3L42.4 276.0L43.2 273.4L44.9 269.4L46.9 284.0L48.1 271.6L48.9 277.0L50.1 266.0L51.2 277.7L53.2 281.9L54.5 275.6L55.3 279.9L56.6 274.6L59.0 273.0L60.8 287.9L63.2 286.3L64.2 278.9L65.0 276.4L66.0 268.3L67.6 273.8L69.9 287.1L72.2 271.5L74.6 288.7L76.2 280.8L78.2 287.9L80.4 270.7L82.4 281.6L84.0 274.6L86.3 284.8L87.9 278.5L89.8 303.2L91.8 272.2L94.1 298.0L95.7 280.8L98.0 294.1L99.6 288.7L101.2 273.8L103.5 292.6L105.1 284.8L107.4 283.2L109.8 301.2L112.1 276.2L114.4 287.9L116.0 294.1L117.6 287.1L118.4 289.6L119.9 283.2L122.2 281.6L124.6 277.7L126.0 283.5L126.8 286.8L128.2 293.3L130.4 279.3L132.4 286.3L133.5 282.4L134.8 290.2L137.1 286.3L139.4 288.7L140.8 290.0L141.6 294.1L142.9 296.5L143.9 296.7L144.7 292.6L145.7 291.8L146.8 288.9L147.7 291.6L148.8 289.4L150.8 281.7L151.6 285.3L153.5 278.5L155.1 286.3L155.8 281.9L157.9 298.0L159.8 291.8L162.1 294.1L164.4 288.7L165.6 289.2L166.4 293.4L167.6 294.9L169.1 305.1L170.7 291.0L173.0 287.1L174.2 283.8L175.0 287.8L176.2 285.5L178.5 295.7L180.1 293.3L181.4 302.6L182.2 297.8L183.5 305.8L184.9 297.0L185.7 292.8L187.1 282.9L188.7 295.7L191.0 291.0L192.3 292.5L193.5 284.2L194.8 296.7L195.8 295.1L197.0 291.4L198.2 297.7L199.3 289.5L200.7 289.6L201.9 303.7L203.0 295.2L204.1 289.3L205.4 296.5L206.7 292.2L208.0 306.1L209.1 284.8L210.1 291.0L211.2 296.2L212.3 288.0L213.6 291.5L214.5 301.0L215.8 297.9L217.0 294.7L218.0 296.9L219.0 293.6L220.3 297.9L221.4 293.6L222.8 293.3L223.8 298.3L224.8 300.9L225.8 297.9L227.1 305.8L228.2 292.5L229.5 302.8L230.8 308.6L232.1 307.2L233.0 301.1L234.3 304.4L235.6 305.0L236.7 300.0L238.0 308.7L239.2 301.3L240.5 298.7L241.8 311.1L242.9 308.4L243.9 301.1L245.2 298.0L246.4 299.5L247.3 307.8L248.7 299.6L249.7 300.0L250.9 309.6L252.2 299.5L253.5 307.2L254.7 302.8L255.7 306.1L256.8 299.2L258.0 306.1L259.2 300.1L260.3 305.6L261.4 306.2L262.7 300.4L264.0 311.7L265.0 305.1L266.0 307.0L267.1 302.5L268.4 312.5L269.4 299.8L270.7 309.0L272.0 310.3L273.1 302.2L274.1 306.1L275.2 299.9L276.5 315.7L277.6 304.9L278.6 308.6L279.6 314.0L280.8 305.4L282.0 313.4L283.2 305.6L284.5 309.5L285.8 306.0L286.9 310.8L287.9 305.4L289.0 308.6L289.9 308.5L291.1 315.1L292.1 315.5L293.4 307.4L294.7 317.3L295.9 308.2L296.9 315.9L298.0 310.4L299.2 310.6L300.3 318.1L301.6 314.2L303.0 317.9L304.1 312.0L305.2 314.2L306.3 314.1L307.4 315.9L308.6 304.9L309.7 314.7L310.9 314.4L312.1 308.2L313.2 313.9L314.5 317.0L315.8 312.9L316.8 321.0L318.0 310.7L319.0 322.5L320.2 314.5L321.2 317.9L322.2 306.3L323.3 315.2L324.5 313.3L325.6 318.3L326.6 314.7L327.8 318.2L328.9 314.4L329.9 315.9L331.1 324.5L332.1 307.9L333.3 320.7L334.3 320.9L335.6 324.3L336.5 317.2L337.6 320.2L338.9 318.7L339.9 316.7L340.9 315.2L342.1 314.1L343.1 323.3L344.4 315.8L345.4 324.0L346.7 322.8L347.9 319.0L349.0 313.3L350.0 320.6L351.1 313.8L352.1 317.1L353.2 322.5L354.5 320.3L355.9 319.6L356.9 321.9L357.9 316.0L359.0 321.6L360.1 319.8L361.1 319.9L362.2 318.0L363.3 324.9L364.3 325.1L365.4 323.3L366.7 317.5L367.8 322.3L369.0 326.6L370.2 321.6L371.5 330.9L372.6 321.5L373.8 324.4L375.0 321.4L375.9 326.4L377.2 326.4L378.2 323.6L379.2 323.2L380.2 315.6L381.2 325.5L382.2 318.1L383.2 324.9L384.3 330.2L385.6 323.8L386.7 330.1L387.8 316.5L388.8 326.3L390.1 332.3L391.2 332.5L392.2 322.2L393.2 325.4L394.3 325.3L395.4 320.0L396.5 325.0L397.8 329.4L398.8 328.3L399.7 325.7L400.8 319.3L401.8 328.8L403.1 324.8L404.3 330.5L405.3 331.6L406.6 329.1L407.8 327.3L409.0 323.9L410.1 331.0L411.1 323.9L412.1 330.6L413.4 325.0L414.4 333.2L415.5 327.3L416.7 336.3L417.7 328.3L418.8 332.5L419.9 326.2L421.0 335.1L422.0 326.3L423.0 328.6L424.3 330.4L425.3 333.0L426.4 335.3L427.7 332.6L428.9 336.0L429.9 329.1L431.0 334.1L432.0 331.7L433.1 334.6L434.3 332.9L435.5 335.0L436.9 330.3L438.0 341.6L439.0 333.7L440.3 336.9L441.6 334.0L442.8 338.8L444.0 331.5L445.1 334.0L446.2 328.9L447.2 339.9L448.2 336.1L449.4 335.6L450.4 338.8L451.4 339.0L452.5 335.1L453.9 338.5L454.8 336.2L456.0 338.6L457.2 334.1L458.3 338.0L459.3 332.5L460.4 337.3L461.5 336.2L462.5 338.4L463.7 337.3L464.8 338.4L466.2 343.0L467.5 335.8L468.5 331.4L469.6 339.4L470.7 339.6L472.0 336.3L473.1 339.4L474.4 332.9L475.7 341.5L476.8 337.2L478.1 345.5L479.2 338.5L480.3 335.7L481.4 340.3L482.4 344.4L483.6 338.7L484.6 340.7L486.0 338.1L486.9 340.6L488.0 337.1L489.0 342.4L490.4 339.0L491.6 345.1L492.6 342.2L493.7 344.1L495.0 347.7L496.1 340.4L497.4 342.9L498.4 346.4L499.6 341.4L500.7 346.0L501.9 344.9L503.0 347.3L504.0 343.3L505.3 348.4L506.3 342.0L507.5 347.2L508.5 344.2L509.6 338.0L510.7 346.4L512.0 341.2L513.3 344.4L514.6 341.6L515.7 348.0L517.0 344.6L518.3 346.5L519.3 341.8L520.5 347.9L521.8 342.0L523.1 351.5L524.1 347.4L525.4 343.0L526.5 347.8L527.5 344.4L528.6 351.0L529.6 347.2L530.8 348.0L532.1 351.1L533.1 347.2L534.1 348.5L535.5 349.4L536.8 346.5L538.0 354.6L539.1 345.9L540.3 352.1L541.5 347.5L542.6 350.2L543.6 351.6L544.8 352.3L545.9 347.2L547.1 350.3L548.4 345.0L549.5 352.7L550.6 348.8L551.7 354.6L552.7 347.9L553.7 351.6L555.0 355.6L556.1 352.0L557.2 355.6L558.2 351.2L559.5 354.1L560.6 349.2L561.9 353.8L563.1 351.0L564.4 356.1L565.7 354.2L566.9 351.4L568.1 354.2L569.2 350.9L570.6 356.9L571.7 351.7L572.8 357.3L574.0 356.6L575.2 353.7L576.4 350.0L577.6 356.0L579.0 353.6L580.1 355.9L581.3 354.1L582.5 357.7L583.8 355.1L585.1 359.9L586.2 350.7L587.4 361.3L588.5 356.3L589.6 355.4L590.7 357.3L591.9 354.9L593.0 357.5L594.1 355.4L595.4 360.6L596.7 357.5L598.0 359.0L599.0 353.4L600.0 360.9L601.4 354.7L602.7 362.3L603.9 356.1L605.2 357.6L606.2 357.1L607.2 357.0L608.5 358.4L609.7 361.9L610.8 358.1L612.0 359.9L613.3 353.1L614.5 359.1L615.7 354.3L616.8 358.4L617.9 356.4L619.0 356.6L620.1 357.8L621.3 356.5L622.5 361.4L623.7 357.7L624.8 360.4L626.0 363.3L627.2 361.8L628.4 358.5L629.5 361.4L630.5 355.7L631.6 365.1L632.6 358.9L633.8 364.7L634.9 361.0L636.1 360.8L637.2 363.9L638.4 361.7L639.4 361.3L640.6 367.2L641.9 362.6L643.0 364.4L644.2 358.3L645.2 365.0L646.5 357.8L647.5 364.3L648.5 367.0L649.8 363.5L650.9 364.4L652.2 360.7L653.3 365.7L654.6 364.2L655.9 359.8L657.1 366.2L658.2 362.5L659.4 367.0L660.5 365.4L661.7 361.8L663.0 371.0L664.0 364.0L665.3 367.9L666.6 363.8L667.6 364.6L668.7 370.8L669.8 366.0L670.9 369.3L672.0 367.2L673.0 364.5L674.2 369.1L675.2 368.4L676.4 370.0L677.5 368.7L678.8 371.4L679.9 367.2L681.1 365.0L682.1 371.5L683.1 367.5L684.4 370.2L685.5 367.2L686.7 374.4L687.8 369.7L689.1 369.9L690.2 374.5L691.2 375.1L692.5 371.4L693.9 373.1L695.1 370.7L696.1 371.6L697.1 371.2L698.2 374.0L699.5 369.8L700.6 376.7L701.8 373.2L702.9 373.2L703.9 369.4L705.2 374.5L706.3 370.9L707.4 376.5L708.8 372.0L709.8 373.4L710.8 368.2L712.1 372.3L713.1 371.8L714.1 372.2L715.0 377.0L716.2 374.3L717.2 378.9L718.2 375.2L719.3 377.1L720.6 373.4L721.5 378.3L722.5 374.5L723.8 376.4L725.0 375.8L726.2 377.9L727.4 377.8L728.6 380.8L729.9 381.1L731.1 377.5L732.3 378.1L733.2 379.2L734.2 375.0L735.2 380.3L736.4 377.4L737.4 382.1L738.4 379.0L739.4 380.0L740.7 378.0L741.7 385.3L742.8 379.1L744.1 383.3L745.2 377.7L746.5 377.4L747.7 384.0L748.8 380.7L749.8 382.7L750.8 382.3L752.0 379.3L753.0 381.7L754.0 383.3L755.1 381.8L756.1 379.7L757.3 384.5L758.5 383.5L759.5 386.0L760.5 383.4L761.7 382.9L762.9 384.7L764.1 383.0L765.2 386.3L766.3 384.1L767.5 390.7L768.7 385.2L769.9 385.9L771.1 388.0L772.4 388.9L773.6 383.9L774.7 383.6L775.9 390.7L776.9 387.9L778.1 386.6L779.2 391.7L780.3 386.8L781.3 389.2L782.4 384.5L783.5 390.6L784.7 388.6L785.8 386.6L786.8 386.9L787.8 389.8L789.1 389.5L790.2 386.9L791.4 392.9L792.6 389.0L793.7 391.7L794.9 390.9L796.0 390.4L797.1 391.1L798.1 394.5L799.4 394.4L800.5 392.3L801.5 394.3L802.8 380.5L804.1 397.0L805.2 391.6L806.2 393.5L807.4 391.0L808.5 394.5L809.5 393.8L810.8 396.7L811.8 393.2L812.8 397.1L814.2 394.7L815.3 398.5L816.6 395.5L817.6 399.4L818.9 396.3L820.2 396.9L821.3 396.0L822.6 397.4L823.6 396.6L824.7 397.6L825.8 398.9L827.1 397.6L828.1 399.8L829.2 397.6L830.3 401.3L831.6 399.7L832.8 403.6L834.1 400.3L835.1 402.2L836.3 402.1L837.4 400.9L838.5 405.2L839.7 401.0L840.7 406.0L841.9 401.6L843.1 403.9L844.1 401.6L845.2 406.3L846.5 405.7L847.8 402.6L849.0 405.6L850.1 405.1L851.4 401.3L852.3 406.0L853.4 405.0L854.5 408.0L855.5 403.9L856.5 408.8L857.4 404.2L858.5 399.0L859.8 406.3L860.9 411.2L861.9 407.6L863.1 404.7L864.3 410.6L865.4 409.5L866.4 413.3L867.5 410.5L868.6 412.3L869.6 410.6L870.8 413.5L872.0 412.1L873.3 415.6L874.6 412.1L875.8 414.7L877.1 413.4L878.1 416.0L879.3 415.2L880.5 416.6L881.4 416.7L882.6 417.9L883.8 416.7L884.7 419.4L886.1 416.6L887.1 419.5L888.1 421.7L889.5 422.6L890.7 420.5L891.8 421.0L893.1 419.0L894.3 423.2L895.6 420.1L896.7 419.9L897.7 421.4L898.6 419.6L899.6 424.7L900.7 418.7L901.8 423.6L903.1 421.8L904.2 423.1L905.2 420.6L906.5 419.9L907.7 423.5L908.9 426.7L910.1 425.6L911.4 424.7L912.5 427.4L913.7 424.1L914.8 426.8L916.0 429.7L917.0 426.4L918.1 429.7L919.3 426.8L920.3 428.2L921.5 426.5L922.7 426.6L923.8 430.4L924.8 429.1L925.9 430.9L926.9 428.3L928.1 429.2L929.4 428.8L930.7 435.0L931.8 427.0L932.8 432.6L934.0 430.4L935.1 435.9L936.3 434.3L937.5 432.2L938.8 435.5L939.9 438.3L940.9 436.1L942.2 435.3L943.4 438.0L944.5 435.3L945.7 437.0L947.0 438.4L948.1 437.2L949.2 439.2L950.1 436.4L951.1 440.1L952.3 436.7L953.6 440.3L954.9 438.8L956.1 442.6L957.4 441.3L958.6 445.0L959.7 441.5L960.8 447.5L961.9 441.1L962.9 444.4L964.0 443.1L965.0 445.8L966.2 444.1L967.4 444.7L968.7 448.0L970.0 445.0L971.1 445.8L972.1 447.9L973.1 443.0L974.2 452.3L975.2 442.9L976.2 450.7L977.4 449.3L978.6 446.4L979.7 450.2L980.9 446.6L982.0 449.5L983.1 450.1L984.4 449.2L985.4 451.7L986.5 451.0L987.7 449.0L988.8 455.2L989.8 445.8L990.9 451.6L991.8 450.1L992.9 452.4L993.9 453.0L995.1 453.9L996.2 455.4L997.5 453.9L998.5 455.9L999.6 452.8L1000.9 459.4L1002.1 452.2L1003.3 457.8L1004.5 457.6L1005.6 454.3L1006.9 463.5L1008.0 452.8L1009.1 452.5L1010.2 457.0L1011.4 455.0L1012.7 463.7L1014.0 457.5L1015.3 458.6L1016.6 461.5L1017.9 460.2L1018.9 465.6L1020.2 460.6L1021.4 461.7L1022.5 460.4L1023.8 466.1L1024.0 459.0L1025.2 466.0L1028.0 472.0L1031.0 480.0L1034.0 487.0L1035.0 490.0" fill="none" stroke="#0a0a82" stroke-width="0.950" stroke-linejoin="round"/></svg>
<div class="a" style="left:69px;top:656px;width:1036px;height:16px;background:repeating-conic-gradient(#ffffff 0 25%,#f1f1f1 0 50%) 0 0/2px 2px"></div>
<div class="a" style="left:69px;top:672px;width:1037px;height:2px;background:#fff"></div>
<div class="a" style="left:1105px;top:166px;width:1px;height:508px;background:#fbfbfb"></div>
<div class="a" style="left:69px;top:656px;width:16px;height:15px;background:#f0f0f0;border:1px solid;border-color:#fff #6c6c6c #6c6c6c #fff"></div>
<div class="a" style="left:86px;top:656px;width:17px;height:15px;background:#f0f0f0;border:1px solid;border-color:#fff #6c6c6c #6c6c6c #fff"></div>
<div class="a" style="left:1088px;top:656px;width:16px;height:15px;background:#f0f0f0;border:1px solid;border-color:#fff #6c6c6c #6c6c6c #fff"></div>
<svg class="a" style="left:69px;top:656px" width="1040" height="16"><path d="M9.500 4L5.500 7.500L9.500 11ZM1025 4L1029 7.500L1025 11Z" fill="#000"/></svg>
<div class="a" style="left:142px;top:672px;width:1px;height:3px;background:#000"></div>
<div class="a" style="left:198px;top:672px;width:1px;height:3px;background:#000"></div>
<div class="a" style="left:237px;top:672px;width:1px;height:3px;background:#000"></div>
<div class="a" style="left:268px;top:672px;width:1px;height:2px;background:#000"></div>
<div class="a" style="left:293px;top:672px;width:1px;height:3px;background:#000"></div>
<div class="a" style="left:314px;top:672px;width:1px;height:2px;background:#000"></div>
<div class="a" style="left:333px;top:672px;width:1px;height:3px;background:#000"></div>
<div class="a" style="left:349px;top:672px;width:1px;height:2px;background:#000"></div>
<div class="a" style="left:363px;top:672px;width:1px;height:3px;background:#000"></div>
<div class="a" style="left:459px;top:672px;width:1px;height:3px;background:#000"></div>
<div class="a" style="left:515px;top:672px;width:1px;height:3px;background:#000"></div>
<div class="a" style="left:554px;top:672px;width:1px;height:3px;background:#000"></div>
<div class="a" style="left:585px;top:672px;width:1px;height:2px;background:#000"></div>
<div class="a" style="left:610px;top:672px;width:1px;height:3px;background:#000"></div>
<div class="a" style="left:631px;top:672px;width:1px;height:2px;background:#000"></div>
<div class="a" style="left:650px;top:672px;width:1px;height:3px;background:#000"></div>
<div class="a" style="left:666px;top:672px;width:1px;height:2px;background:#000"></div>
<div class="a" style="left:680px;top:672px;width:1px;height:3px;background:#000"></div>
<div class="a" style="left:776px;top:672px;width:1px;height:3px;background:#000"></div>
<div class="a" style="left:831px;top:672px;width:1px;height:3px;background:#000"></div>
<div class="a" style="left:871px;top:672px;width:1px;height:3px;background:#000"></div>
<div class="a" style="left:902px;top:672px;width:1px;height:2px;background:#000"></div>
<div class="a" style="left:927px;top:672px;width:1px;height:3px;background:#000"></div>
<div class="a" style="left:948px;top:672px;width:1px;height:2px;background:#000"></div>
<div class="a" style="left:966px;top:672px;width:1px;height:3px;background:#000"></div>
<div class="a" style="left:983px;top:672px;width:1px;height:2px;background:#000"></div>
<div class="a" style="left:997px;top:672px;width:1px;height:3px;background:#000"></div>
<div class="a" style="left:1092px;top:672px;width:1px;height:3px;background:#000"></div>
<div class="t" style="left:135.15px;top:677.20px;font-size:12px;">20</div>
<div class="t" style="left:191.24px;top:677.20px;font-size:12px;">30</div>
<div class="t" style="left:230.33px;top:677.20px;font-size:12px;">40</div>
<div class="t" style="left:286.15px;top:677.20px;font-size:12px;">60</div>
<div class="t" style="left:326.21px;top:677.20px;font-size:12px;">80</div>
<div class="t" style="left:352.67px;top:677.20px;font-size:12px;">100</div>
<div class="t" style="left:448.82px;top:677.20px;font-size:12px;">200</div>
<div class="t" style="left:504.91px;top:677.20px;font-size:12px;">300</div>
<div class="t" style="left:544.00px;top:677.20px;font-size:12px;">400</div>
<div class="t" style="left:599.82px;top:677.20px;font-size:12px;">600</div>
<div class="t" style="left:639.88px;top:677.20px;font-size:12px;">800</div>
<div class="t" style="left:668.08px;top:677.20px;font-size:12px;">1.0k</div>
<div class="t" style="left:764.23px;top:677.20px;font-size:12px;">2.0k</div>
<div class="t" style="left:819.32px;top:677.20px;font-size:12px;">3.0k</div>
<div class="t" style="left:859.41px;top:677.20px;font-size:12px;">4.0k</div>
<div class="t" style="left:915.23px;top:677.20px;font-size:12px;">6.0k</div>
<div class="t" style="left:954.29px;top:677.20px;font-size:12px;">8.0k</div>
<div class="t" style="left:981.75px;top:677.20px;font-size:12px;">10.0k</div>
<div class="t" style="left:1076.90px;top:677.20px;font-size:12px;">20.0k</div>
<div class="t" style="left:602.79px;top:688.00px;font-size:12px;">Frequency (Hz)</div>
<div class="t" style="left:576.52px;top:151.70px;font-size:12px;transform:scaleX(1.025);transform-origin:0 0;">Left</div>
<div class="t" style="left:15.6px;top:488.1px;font-size:12px;transform:rotate(-90deg) scaleX(1.117);transform-origin:0 0">Relative Amplitude (dB)</div>
<div class="a" style="left:1113px;top:166px;width:24px;height:508px;background:#949486"></div>
<div class="a" style="left:1115px;top:168px;width:22px;height:487px;background:#ffffe1"></div>
<div class="a" style="left:1115px;top:655px;width:22px;height:19px;background:#f0f0f0;border-right:1px solid #fff;border-bottom:1px solid #fff"></div>
<div class="a" style="left:1136px;top:168px;width:1px;height:488px;background:#ffffee"></div>
<div class="a" style="left:1117px;top:324px;width:16px;height:331px;background:#0000f0"></div>
<div class="a" style="left:1135px;top:167px;width:3px;height:1px;background:#000"></div><div class="a" style="left:1135px;top:208px;width:3px;height:1px;background:#000"></div><div class="a" style="left:1135px;top:249px;width:3px;height:1px;background:#000"></div><div class="a" style="left:1135px;top:289px;width:3px;height:1px;background:#000"></div><div class="a" style="left:1135px;top:330px;width:3px;height:1px;background:#000"></div><div class="a" style="left:1135px;top:371px;width:3px;height:1px;background:#000"></div><div class="a" style="left:1135px;top:411px;width:3px;height:1px;background:#000"></div><div class="a" style="left:1135px;top:452px;width:3px;height:1px;background:#000"></div><div class="a" style="left:1135px;top:493px;width:3px;height:1px;background:#000"></div><div class="a" style="left:1135px;top:533px;width:3px;height:1px;background:#000"></div><div class="a" style="left:1135px;top:574px;width:3px;height:1px;background:#000"></div><div class="a" style="left:1135px;top:615px;width:3px;height:1px;background:#000"></div><div class="a" style="left:1135px;top:655px;width:3px;height:1px;background:#000"></div>
<div class="t" style="left:1114.71px;top:676.60px;font-size:12px;transform:scaleX(1.028);transform-origin:0 0;">Pwr</div>
<div class="sm" style="left:1121px;top:690px"></div><div class="sm" style="left:1267px;top:690px"></div>
<div class="t" style="left:1207.86px;top:155.00px;font-size:12px;transform:scaleX(0.994);transform-origin:0 0;text-decoration:underline;">Overlays</div>
<div class="t" style="left:1189.5px;top:177px;font-size:12px;transform:translate(-50%,-50%) rotate(-90deg)">Set</div>
<div class="t" style="left:1205px;top:177px;font-size:12px;transform:translate(-50%,-50%) rotate(-90deg)">On</div>
<div class="ob" style="top:190px"></div><div class="ck" style="top:190px"></div>
<div class="t" style="left:1184.79px;top:189.80px;font-size:12px;">1</div>
<div class="t" style="left:1215.28px;top:190.50px;font-size:12px;transform:scaleX(0.970);transform-origin:0 0;color:#2c8234;">Overlay 1</div>
<div class="ob" style="top:206px"></div><div class="ck" style="top:206px"></div>
<div class="t" style="left:1184.94px;top:205.80px;font-size:12px;">2</div>
<div class="t" style="left:1215.28px;top:206.50px;font-size:12px;transform:scaleX(0.970);transform-origin:0 0;color:#2fb3b3;">Overlay 2</div>
<div class="ob" style="top:222px"></div><div class="ck" style="top:222px"></div>
<div class="t" style="left:1185.00px;top:221.80px;font-size:12px;">3</div>
<div class="t" style="left:1215.28px;top:222.50px;font-size:12px;transform:scaleX(0.970);transform-origin:0 0;color:#86208c;">Overlay 3</div>
<div class="ob" style="top:238px"></div><div class="ck" style="top:238px"></div>
<div class="t" style="left:1185.00px;top:237.80px;font-size:12px;">4</div>
<div class="t" style="left:1215.28px;top:238.50px;font-size:12px;transform:scaleX(0.970);transform-origin:0 0;color:#e040e0;">Overlay 4</div>
<div class="ob" style="top:254px"></div><div class="ck" style="top:254px"></div>
<div class="t" style="left:1184.97px;top:253.80px;font-size:12px;">5</div>
<div class="t" style="left:1215.28px;top:254.50px;font-size:12px;transform:scaleX(0.970);transform-origin:0 0;color:#80552e;">Overlay 5</div>
<div class="ob" style="top:270px"></div><div class="ck" style="top:270px"></div>
<div class="t" style="left:1184.91px;top:269.80px;font-size:12px;">6</div>
<div class="t" style="left:1215.28px;top:270.50px;font-size:12px;transform:scaleX(0.970);transform-origin:0 0;color:#e8a07c;">Overlay 6</div>
<div class="ob" style="top:286px"></div><div class="ck" style="top:286px"></div>
<div class="t" style="left:1183.89px;top:285.80px;font-size:12px;">C</div>
<div class="t" style="left:1215.17px;top:286.50px;font-size:12px;transform:scaleX(1.057);transform-origin:0 0;color:#000;">Composite</div>
<div class="a" style="left:1179px;top:302px;width:63px;height:17px;border:1px solid;border-color:#fff #606060 #606060 #fff;box-shadow:1px 1px 0 #303030"></div>
<div class="t" style="left:1185.46px;top:305.00px;font-size:12px;transform:scaleX(1.005);transform-origin:0 0;">Options...</div>
<div class="a" style="left:9px;top:702px;width:1269px;height:1px;background:#6a6a6a"></div>
<div class="a" style="left:9px;top:703px;width:1269px;height:25px;background:#f0f0f0;border-top:1px solid #fff;border-bottom:4px solid #fff"></div>
<div class="sp" style="left:12px;width:118px"></div>
<div class="sp" style="left:132px;width:100px"></div>
<div class="sp" style="left:235px;width:70px"></div>
<div class="sp" style="left:308px;width:52px"></div>
<div class="sp" style="left:361px;width:62px"></div>
<div class="sp" style="left:424px;width:101px"></div>
<div class="sp" style="left:527px;width:73px"></div>
<div class="t" style="left:15.25px;top:708.60px;font-size:12px;transform:scaleX(1.044);transform-origin:0 0;">Running...</div>
<div class="t" style="left:135.23px;top:708.60px;font-size:12px;transform:scaleX(1.061);transform-origin:0 0;">Real Time</div>
<div class="t" style="left:238.94px;top:708.60px;font-size:12px;transform:scaleX(1.029);transform-origin:0 0;">96000 Hz</div>
<div class="t" style="left:311.89px;top:708.60px;font-size:12px;transform:scaleX(1.015);transform-origin:0 0;">24 Bit</div>
<div class="t" style="left:364.53px;top:708.60px;font-size:12px;transform:scaleX(1.015);transform-origin:0 0;">Mono</div>
<div class="t" style="left:427.77px;top:708.60px;font-size:12px;transform:scaleX(1.017);transform-origin:0 0;">FFT 1048576 pts</div>
<div class="t" style="left:530.28px;top:708.60px;font-size:12px;transform:scaleX(1.013);transform-origin:0 0;">Bartlett</div>
<div class="a" style="left:602px;top:706px;width:675px;height:17px;background:#f0f0f0;border:1px solid;border-color:#868686 #fff #fff #868686"></div>
<div class="a" style="left:605px;top:708px;width:538px;height:14px;background:linear-gradient(90deg,#22e622 0%,#44de20 22%,#72d01e 45%,#9cc41c 68%,#bcc01e 86%,#d2c222 100%)"></div>
<div class="a" style="left:605px;top:708px;width:538px;height:14px;background:repeating-linear-gradient(90deg,transparent 0,transparent 3px,rgba(0,0,0,0.14) 3px,rgba(0,0,0,0.14) 4px)"></div>
<div class="a" id="task"></div>
<svg class="a" style="left:15px;top:739px" width="18" height="18" viewBox="0 0 18 18"><path d="M0.500 2.600L7.200 1.700V8.300H0.500ZM8.100 1.500L17 0.300V8.300H8.100ZM0.500 9.200H7.200V15.800L0.500 14.900ZM8.100 9.200H17V17.200L8.100 16Z" fill="#fff"/></svg>
<svg class="a" style="left:63px;top:739px" width="18" height="17" viewBox="0 0 18 17"><path d="M1 0.500V2.500M1 0.500H11.500M11.500 0.500V2.500M1 15.500V13.500M1 15.500H11.500M11.500 15.500V13.500" fill="none" stroke="#fff" stroke-width="1.100"/><rect x="1.500" y="4.500" width="10" height="7" fill="none" stroke="#fff" stroke-width="1.200"/><path d="M14.800 0V3.500M14.800 6.500V16" stroke="#fff" stroke-width="1.300"/><rect x="14" y="4.300" width="2.600" height="2.200" fill="#fff"/></svg>
<svg class="a" style="left:110px;top:735px" width="26" height="26" viewBox="0 0 26 26"><defs><linearGradient id="eg1" x1="0" y1="0" x2="1" y2="1"><stop offset="0" stop-color="#35c1f1"/><stop offset=".6" stop-color="#3cc98a"/><stop offset="1" stop-color="#5fd66b"/></linearGradient><linearGradient id="eg2" x1="0" y1="0" x2="0" y2="1"><stop offset="0" stop-color="#1b8fd6"/><stop offset="1" stop-color="#0c5aa8"/></linearGradient></defs>
<path d="M1.200 12.500C1.500 5.500 7 0.800 13.200 0.800C20 0.800 25 5.500 25 11.500C25 15.500 22 17.800 19 17.800C16.500 17.800 15.300 16.800 15.300 15.800C15.300 15 16.300 14.500 16.300 12.800C16.300 10.500 14 8.500 10.800 8.500C6.500 8.500 3 11.500 1.200 12.500Z" fill="url(#eg1)"/>
<path d="M1.200 12.500C1.200 20 6.500 25.200 13 25.200C17.500 25.200 21 23 23 19.800C20 21.500 16 21.800 13 20C9.500 18 8.500 14 10.500 11C11.500 9.500 13 8.800 13 8.800C7 7.500 2 10 1.200 12.500Z" fill="url(#eg2)"/>
<path d="M10.500 11C8.500 14 9.500 18 13 20C16 21.800 20 21.500 23 19.800C23.500 19 22.800 18.500 22.300 18.800C20 20 16.500 19.500 14.500 17.500C12.500 15.500 12.500 12.500 13.500 10.500Z" fill="#1565c0" opacity=".55"/></svg>
<svg class="a" style="left:161px;top:738px" width="22" height="19" viewBox="0 0 22 19"><path d="M0.500 1.500Q0.500 0.500 1.500 0.500H8L10 2.500H20.500Q21.500 2.500 21.500 3.500V17.500H0.500Z" fill="#e9a82e"/><rect x="0.500" y="4" width="21" height="14.300" rx=".8" fill="#fcd462"/><path d="M5.500 18.300V11.500Q5.500 10.500 6.500 10.500H15.500Q16.500 10.500 16.500 11.500V18.300Z" fill="#4a8bc2"/><rect x="8" y="14.500" width="6" height="3.800" fill="#fcd462"/></svg>
<svg class="a" style="left:208px;top:735px" width="25" height="26" viewBox="0 0 25 26"><path d="M7 7V4Q7 1.500 9.500 1.500H15.500Q18 1.500 18 4V7" fill="none" stroke="#f2f2f2" stroke-width="1.600"/><path d="M0.800 6.500H24.200L23.500 25H1.500Z" fill="#f4f4f4"/><rect x="7.300" y="11.500" width="4.300" height="4.300" fill="#e0572a"/><rect x="12.700" y="11.500" width="4.300" height="4.300" fill="#7fb52c"/><rect x="7.300" y="16.900" width="4.300" height="4.300" fill="#2a9fd8"/><rect x="12.700" y="16.900" width="4.300" height="4.300" fill="#f2b92a"/></svg>
<svg class="a" style="left:258px;top:736px" width="24" height="24" viewBox="0 0 24 24"><rect width="24" height="24" fill="#6f8f4e"/><rect y="15" width="24" height="9" fill="#65854a"/><path d="M0 13.500H5.500L8.500 2.500L11.500 19.500L15 2.500L17.500 13.500H24" fill="none" stroke="#fff" stroke-width="2.200" stroke-linejoin="round"/><path d="M0 15.500H24" stroke="#9cb47c" stroke-width="1"/></svg>
<div class="a" style="left:295px;top:727px;width:48px;height:41px;background:#4c7083"></div><div class="a" style="left:295px;top:766px;width:48px;height:2px;background:#76b9ed"></div>
<div class="a" style="left:307px;top:736px;width:24px;height:24px"><svg style="position:absolute;left:0;top:0" width="24" height="24" viewBox="0 0 24 24"><rect width="24" height="24" fill="#fff"/><path d="M6.500 0V24M12 0V24M17.500 0V24M0 6.500H24M0 12H24M0 17.500H24" stroke="#b0b0b0"/><rect x="0.750" y="0.750" width="22.500" height="22.500" fill="none" stroke="#101010" stroke-width="1.500"/><path d="M2 6.500L7 7L8 10L12 11L13.500 8L16 12L18 9.500L19.500 14L21 20" fill="none" stroke="#1818c8" stroke-width="2.200"/><path d="M2 5.500L6.500 5.800M12.500 6.500L15 5.500L17 8L20 13L21.500 17" fill="none" stroke="#d81848" stroke-width="1.400"/></svg></div>
<svg class="a" style="left:985px;top:740px" width="25" height="17" viewBox="0 0 25 17"><rect x="0.700" y="0.700" width="20" height="14.600" rx="1.500" fill="none" stroke="#fff" stroke-width="1.300"/><path d="M20.700 3H22.300Q23.300 3 23.300 4V13.500Q23.300 15.300 21.500 15.300H19" fill="none" stroke="#fff" stroke-width="1.300"/><rect x="4" y="7" width="6.500" height="5" fill="none" stroke="#fff" stroke-width="1.300"/><path d="M4 4.200H17.500M13 7.500H17.500M13 9.700H17.500M13 11.800H17.500" stroke="#fff" stroke-width="1.200"/></svg>
<svg class="a" style="left:1035px;top:739px" width="15" height="18" viewBox="0 0 15 18"><rect x="2.500" y="0.600" width="5" height="3.600" fill="none" stroke="#fff" stroke-width="1.300" stroke-width="1"/><path d="M1.200 4.500H8.800V15Q8.800 16.500 7.300 16.500H2.700Q1.200 16.500 1.200 15Z" fill="none" stroke="#fff" stroke-width="1.300" stroke-width="1.100"/><path d="M8.500 13.500L10.500 15.500L14 11" fill="none" stroke="#fff" stroke-width="1.300" stroke-width="1.100"/></svg>
<svg class="a" style="left:1058px;top:739px" width="14" height="18" viewBox="0 0 14 18"><rect x="4" y="0.500" width="6" height="10.500" rx="3" fill="#fff"/><path d="M1.500 8Q1.500 13.500 7 13.500T12.500 8M7 13.500V16.500M4 16.800H10" fill="none" stroke="#fff" stroke-width="1.300" stroke-width="1.200"/></svg>
<svg class="a" style="left:1080px;top:739px" width="18" height="18" viewBox="0 0 18 18"><circle cx="8" cy="8.500" r="7" fill="none" stroke="#fff" stroke-width="1.300" stroke-width="1.200"/><ellipse cx="8" cy="8.500" rx="3.200" ry="7" fill="none" stroke="#fff" stroke-width="1.300" stroke-width="1.100"/><path d="M1 8.500H15M2 5H14M2 12H10" fill="none" stroke="#fff" stroke-width="1.300" stroke-width="1.100"/><circle cx="13" cy="13.200" r="3.600" fill="#1b3357" stroke="#fff" stroke-width="1.200"/><path d="M10.700 15.500L15.300 11" stroke="#fff" stroke-width="1.200"/></svg>
<svg class="a" style="left:1104px;top:739px" width="19" height="18" viewBox="0 0 19 18"><path d="M0.800 6H3.500L7.500 2V15L3.500 11H0.800Z" fill="none" stroke="#fff" stroke-width="1.300" stroke-width="1.100"/><path d="M10 6Q11.500 8.500 10 11M12.500 4Q15 8.500 12.500 13M15 2Q18.500 8.500 15 15" fill="none" stroke="#fff" stroke-width="1.300" stroke-width="1.100"/></svg>
<svg class="a" style="left:1239px;top:740px" width="17" height="17" viewBox="0 0 17 17"><path d="M0.700 0.700H16.300V11.500H11.500L8.500 14.800L5.500 11.500H0.700Z" fill="none" stroke="#fff" stroke-width="1.300" stroke-width="1.300" stroke-linejoin="round"/></svg>
<div class="a" style="left:1275px;top:727px;width:1px;height:41px;background:#7f8fa5"></div>
<div class="t" style="left:1179.65px;top:733.40px;font-size:12px;transform:scaleX(0.923);transform-origin:0 0;color:#fff;">22:18</div>
<div class="t" style="left:1166.86px;top:750.80px;font-size:12px;transform:scaleX(0.904);transform-origin:0 0;color:#fff;">25.09.2025</div>
<div class="t" style="left:1130.93px;top:741.90px;font-size:12px;transform:scaleX(0.902);transform-origin:0 0;color:#fff;">ENG</div>
</body></html>
